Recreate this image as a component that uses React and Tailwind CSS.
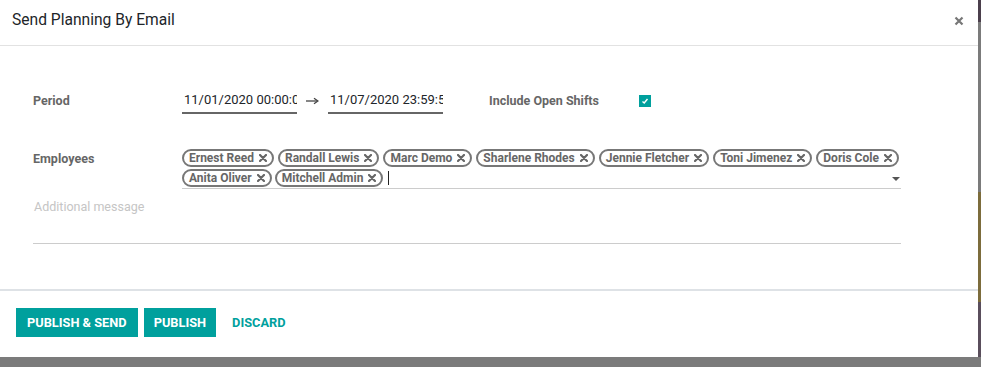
import React from "react";

// 小さな×アイコン（タグ用）
function TagX() {
  return (
    <svg width="8" height="8" viewBox="0 0 8 8" className="ml-[5px] shrink-0">
      <path d="M1 1 L7 7 M7 1 L1 7" stroke="#666" strokeWidth="2.2" strokeLinecap="round" />
    </svg>
  );
}

function Tag({ name }) {
  return (
    <span className="inline-flex items-center h-[18px] px-[5px] rounded-full border-2 border-[#777] text-[12px] font-bold text-[#666] leading-none whitespace-nowrap">
      {name}
      <TagX />
    </span>
  );
}

function App() {
  const row1 = ["Ernest Reed", "Randall Lewis", "Marc Demo", "Sharlene Rhodes", "Jennie Fletcher", "Toni Jimenez", "Doris Cole"];
  const row2 = ["Anita Oliver", "Mitchell Admin"];

  return (
    <div
      className="w-[981px] h-[367px] bg-[#7b7b7b] flex overflow-hidden"
      style={{ fontFamily: "Roboto, 'Liberation Sans', sans-serif" }}
    >
      {/* モーダル本体 */}
      <div className="w-[978px] h-[357px] bg-white flex flex-col">
        {/* ヘッダー */}
        <div className="h-[46px] border-b border-[#e2e2e2] flex items-center justify-between pl-[12px] pr-[14px] pb-[4px]">
          <span className="text-[15.6px] text-[#212529]">Send Planning By Email</span>
          <svg width="10" height="10" viewBox="0 0 10 10">
            <path d="M1.5 1.5 L8.5 8.5 M8.5 1.5 L1.5 8.5" stroke="#777" strokeWidth="2.2" />
          </svg>
        </div>

        {/* 本文 */}
        <div className="flex-1 pl-[33px] pr-[77px] pt-[42px]">
          {/* 期間 */}
          <div className="flex items-center h-[26px]">
            <div className="w-[149px] text-[12.5px] font-bold text-[#666]">Period</div>
            <div className="w-[115px] h-[26px] border-b-2 border-[#666] flex items-center overflow-hidden pl-[2px] text-[13px] text-[#212529] whitespace-nowrap">
              11/01/2020 00:00:00
            </div>
            <div className="w-[31px] flex justify-center">
              <svg width="13" height="8" viewBox="0 0 13 8">
                <path d="M0 4 H11" stroke="#444" strokeWidth="1.3" />
                <path d="M8 1.2 L12 4 L8 6.8" stroke="#444" strokeWidth="1.3" fill="none" />
              </svg>
            </div>
            <div className="w-[115px] h-[26px] border-b-2 border-[#666] flex items-center overflow-hidden pl-[2px] text-[13px] text-[#212529] whitespace-nowrap">
              11/07/2020 23:59:59
            </div>
            <div className="ml-[46px] w-[150px] text-[12.5px] font-bold text-[#666]">Include Open Shifts</div>
            <div className="w-[12px] h-[12px] bg-[#00a09d] flex items-center justify-center">
              <svg width="8" height="8" viewBox="0 0 8 8">
                <path d="M1.5 4.5 L3.2 6 L6.5 2" stroke="white" strokeWidth="1.4" fill="none" />
              </svg>
            </div>
          </div>

          {/* 従業員 */}
          <div className="flex mt-[35px]">
            <div className="w-[149px] text-[12.5px] font-bold text-[#666] pt-[1px]">Employees</div>
            <div className="flex-1 border-b border-[#ccc] pb-[1px] relative">
              <div className="flex gap-[4px]">
                {row1.map((n) => (
                  <Tag key={n} name={n} />
                ))}
              </div>
              <div className="flex gap-[3px] mt-[2px] items-center">
                {row2.map((n) => (
                  <Tag key={n} name={n} />
                ))}
                <span className="ml-[2px] w-[1px] h-[14px] bg-[#222]"></span>
              </div>
              <span className="absolute right-[1px] bottom-[7px] w-0 h-0 border-l-[4px] border-r-[4px] border-t-[4px] border-l-transparent border-r-transparent border-t-[#555]"></span>
            </div>
          </div>

          {/* 追加メッセージ */}
          <div className="mt-[9px] h-[46px] border-b border-[#ccc] pl-[1px] text-[12.5px] text-[#c5c5c5]">
            Additional message
          </div>
        </div>

        {/* フッター */}
        <div className="border-t-2 border-[#dee2e6] h-[68px] flex items-start gap-[6px] pl-[16px] pt-[17px]">
          <button className="h-[29px] px-[11px] bg-[#00a09d] text-white text-[12.8px] font-bold uppercase">
            Publish &amp; Send
          </button>
          <button className="h-[29px] px-[10px] bg-[#00a09d] text-white text-[12.8px] font-bold uppercase">
            Publish
          </button>
          <button className="h-[29px] px-[10px] text-[#00a09d] text-[12.8px] font-bold uppercase">
            Discard
          </button>
        </div>
      </div>

      {/* 右端の背景 */}
      <div className="w-[3px] h-[357px] flex flex-col">
        <div className="h-[22px] bg-[#4b3f4c]"></div>
        <div className="h-[170px] bg-[#7b7b7b]"></div>
        <div className="h-[110px] bg-[#7c6c3c]"></div>
        <div className="flex-1 bg-[#5a4e5c]"></div>
      </div>
    </div>
  );
}

export default App;
